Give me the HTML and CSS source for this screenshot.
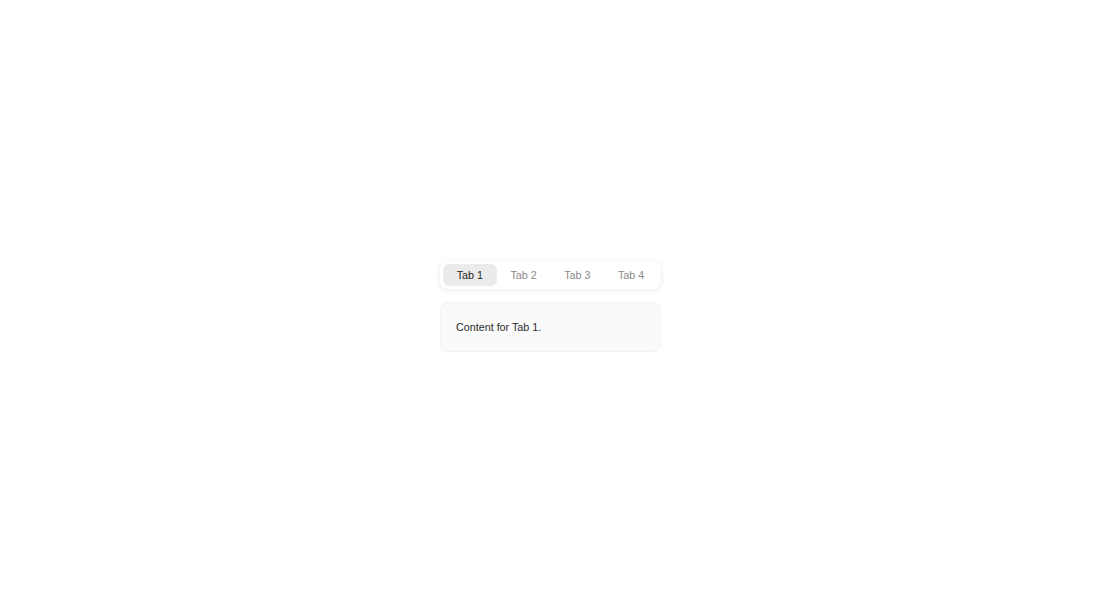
FILE: index.html
```html
<!DOCTYPE html>
<html lang="en">
<head>
<meta charset="utf-8">
<title>Tabs</title>
<link rel="stylesheet" href="styles.css">
</head>
<body>
<div class="page">
  <div class="tabs">
    <div class="tablist">
      <button class="tab active">Tab 1</button>
      <button class="tab">Tab 2</button>
      <button class="tab">Tab 3</button>
      <button class="tab">Tab 4</button>
    </div>
    <div class="panel">Content for Tab 1.</div>
  </div>
</div>
</body>
</html>
```
FILE: styles.css
```css
html, body {
  margin: 0;
  padding: 0;
  background: #ffffff;
}
.page {
  height: 611px;
  display: flex;
  align-items: center;
  justify-content: center;
  font-family: "Liberation Sans", Arial, sans-serif;
}
.tabs {
  width: 221px;
  display: flex;
  flex-direction: column;
  gap: 13px;
  margin-top: 1px;
  margin-left: 1px;
}
.tablist {
  display: flex;
  padding: 3px;
  background: #ffffff;
  border-radius: 8px;
  box-shadow: 0 1px 6px rgba(0, 0, 0, 0.09);
}
.tab {
  flex: 1;
  height: 22px;
  border: 0;
  border-radius: 6px;
  background: transparent;
  font-family: inherit;
  font-size: 10.75px;
  color: #8a8a8a;
  padding: 0;
  cursor: pointer;
}
.tab.active {
  background: #ebebeb;
  color: #262626;
}
.panel {
  box-sizing: border-box;
  height: 50px;
  padding: 16px 15px;
  background: #fafafa;
  border: 1px solid #f3f3f3;
  border-radius: 8px;
  font-size: 10.75px;
  line-height: 16px;
  color: #2a2a2a;
}
```
